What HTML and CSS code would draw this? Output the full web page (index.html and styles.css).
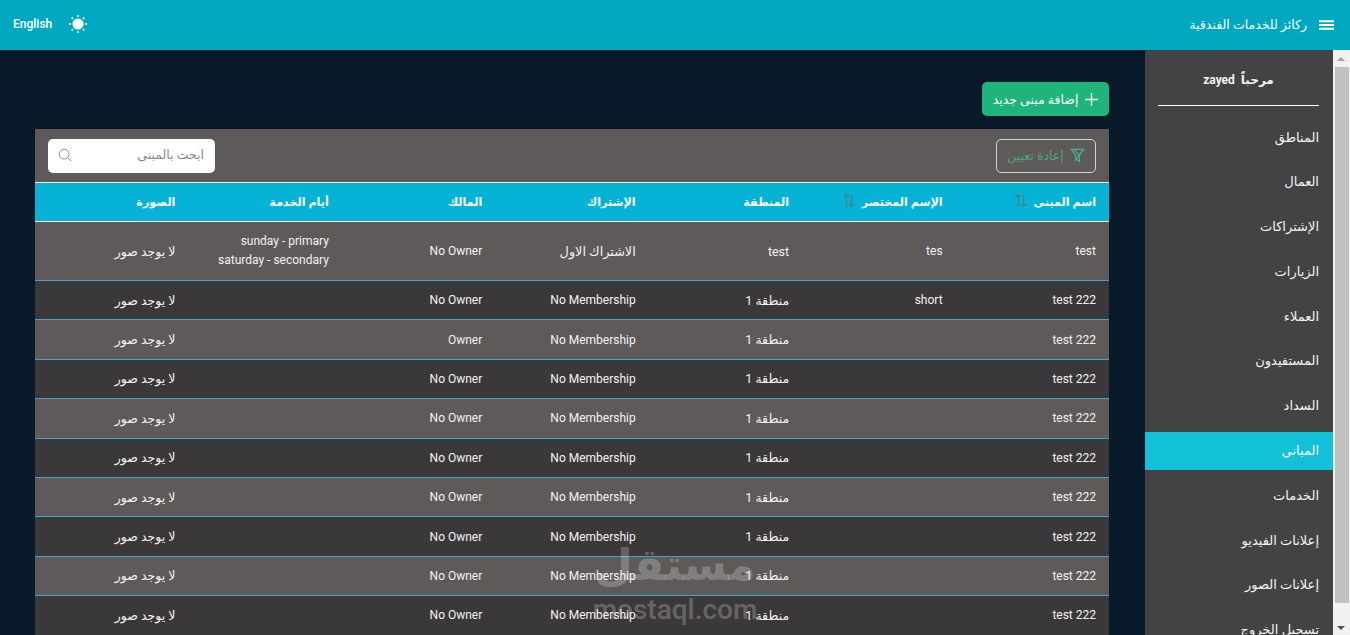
FILE: index.html
```html
<!DOCTYPE html>
<html lang="ar" dir="rtl">
<head>
<meta charset="utf-8">
<title>المباني</title>
<link rel="stylesheet" href="styles.css">
</head>
<body>
<header class="topbar">
  <div class="brand">
    <svg class="menu-icon" viewBox="0 0 16 10"><path d="M0 1h16M0 5h16M0 9h16"/></svg>
    <span>ركائز للخدمات الفندقية</span>
  </div>
  <div class="top-tools">
    <svg class="sun-icon" viewBox="0 0 20 20"><circle cx="10" cy="10" r="5.2"/><path d="M10 0v2M10 18v2M0 10h2M18 10h2M3 3l1.4 1.4M15.6 15.6L17 17M3 17l1.4-1.4M15.6 4.4L17 3"/></svg>
    <span class="lang" dir="ltr">English</span>
  </div>
</header>
<div class="shell">
  <aside class="sidebar">
    <div class="welcome">مرحباً&nbsp; zayed</div>
    <nav class="nav">
      <a>المناطق</a><a>العمال</a><a>الإشتراكات</a><a>الزيارات</a><a>العملاء</a><a>المستفيدون</a><a>السداد</a><a class="active">المباني</a><a>الخدمات</a><a>إعلانات الفيديو</a><a>إعلانات الصور</a><a>تسجيل الخروج</a>
    </nav>
  </aside>
  <main class="content">
    <div class="actions">
      <button class="add-btn"><svg viewBox="0 0 14 14"><path d="M7 0v14M0 7h14"/></svg>إضافة مبنى جديد</button>
    </div>
    <section class="panel">
      <div class="toolbar">
        <button class="reset-btn"><svg viewBox="0 0 16 16"><path d="M1.5 1.5h13L10 7.5v7l-4-3V7.5zM4 1.5l6 6M14.5 1L5 14"/></svg>إعادة تعيين</button>
        <div class="search"><span>ابحث بالمبنى</span><svg viewBox="0 0 16 16"><circle cx="7" cy="7" r="5.6"/><path d="M11 11l4 4"/></svg></div>
      </div>
      <div class="row head">
        <div class="sortable">اسم المبنى <svg viewBox="0 0 14 16"><path d="M4 15V1M1 4l3-3 3 3M10 1v14M7 12l3 3 3-3"/></svg></div>
        <div class="sortable">الإسم المختصر <svg viewBox="0 0 14 16"><path d="M4 15V1M1 4l3-3 3 3M10 1v14M7 12l3 3 3-3"/></svg></div>
        <div>المنطقة</div><div>الإشتراك</div><div>المالك</div><div>أيام الخدمة</div><div>الصورة</div>
      </div>
      <div class="row tall"><div>test</div><div>tes</div><div>test</div><div class="ar">الاشتراك الاول</div><div>No Owner</div><div class="days"><span>sunday - primary</span><span>saturday - secondary</span></div><div>لا يوجد صور</div></div>
      <div class="row"><div>test 222</div><div>short</div><div>منطقة 1</div><div>No Membership</div><div>No Owner</div><div></div><div>لا يوجد صور</div></div>
      <div class="row"><div>test 222</div><div></div><div>منطقة 1</div><div>No Membership</div><div>Owner</div><div></div><div>لا يوجد صور</div></div>
      <div class="row"><div>test 222</div><div></div><div>منطقة 1</div><div>No Membership</div><div>No Owner</div><div></div><div>لا يوجد صور</div></div>
      <div class="row"><div>test 222</div><div></div><div>منطقة 1</div><div>No Membership</div><div>No Owner</div><div></div><div>لا يوجد صور</div></div>
      <div class="row"><div>test 222</div><div></div><div>منطقة 1</div><div>No Membership</div><div>No Owner</div><div></div><div>لا يوجد صور</div></div>
      <div class="row"><div>test 222</div><div></div><div>منطقة 1</div><div>No Membership</div><div>No Owner</div><div></div><div>لا يوجد صور</div></div>
      <div class="row"><div>test 222</div><div></div><div>منطقة 1</div><div>No Membership</div><div>No Owner</div><div></div><div>لا يوجد صور</div></div>
      <div class="row"><div>test 222</div><div></div><div>منطقة 1</div><div>No Membership</div><div>No Owner</div><div></div><div>لا يوجد صور</div></div>
      <div class="row"><div>test 222</div><div></div><div>منطقة 1</div><div>No Membership</div><div>No Owner</div><div></div><div>لا يوجد صور</div></div>
    </section>
  </main>
</div>
<div class="scrollbar"><i class="up"></i><b></b><i class="down"></i></div>
<div class="watermark"><span class="wm-ar">مستقل</span><span class="wm-en" dir="ltr">mostaql.com</span></div>
</body>
</html>
```
FILE: styles.css
```css
* { box-sizing: border-box; }
html, body { margin: 0; height: 635px; overflow: hidden; }
body {
  position: relative;
  background: #081a29;
  color: #f2f2f2;
  font-family: Roboto, "DejaVu Sans", sans-serif;
  font-size: 12.5px;
}
.topbar {
  height: 50px;
  background: #00a9c1;
  display: flex;
  justify-content: space-between;
  align-items: center;
  padding: 0 16px 2px 13px;
  color: #fff;
}
.brand { display: flex; align-items: center; gap: 12px; }
.menu-icon { width: 15px; height: 10px; stroke: #fff; stroke-width: 2; fill: none; margin-top: 2px; }
.top-tools { display: flex; align-items: center; gap: 17px; }
.sun-icon { width: 18px; height: 18px; stroke: #fff; stroke-width: 2; fill: #fff; }
.lang { font-size: 12px; font-weight: 500; }
.shell { display: flex; height: 585px; padding-right: 17px; }
.sidebar { width: 188px; flex: none; background: #434343; overflow: hidden; }
.welcome {
  margin: 0 14px 0 13px;
  height: 56px;
  padding-top: 23px;
  text-align: center;
  font-weight: 700;
  font-size: 12px;
  border-bottom: 1px solid #fff;
}
.nav { display: flex; flex-direction: column; gap: 6.8px; padding-top: 12.5px; }
.nav a {
  height: 38px;
  line-height: 38px;
  padding: 0 14px;
  font-size: 13px;
  flex: none;
}
.nav a.active { background: #12c1d7; }
.content { flex: 1; padding: 32px 36px 0 35px; min-width: 0; }
.actions { display: flex; height: 34px; margin-bottom: 13px; }
.add-btn {
  width: 127px;
  height: 34px;
  border: 0;
  border-radius: 5px;
  background: #1eb47c;
  color: #fff;
  font: inherit;
  display: flex;
  align-items: center;
  justify-content: center;
  gap: 7px;
  padding: 0;
}
.add-btn svg { width: 13px; height: 13px; stroke: #fff; stroke-width: 1.5; fill: none; }
.panel { background: #5e5a5a; }
.toolbar {
  height: 54px;
  padding: 10px 13px 0;
  display: flex;
  justify-content: space-between;
  align-items: flex-start;
  border-bottom: 1px solid #fff;
}
.reset-btn {
  width: 100px;
  height: 34px;
  background: transparent;
  border: 1px solid #c4d8cf;
  border-radius: 5px;
  color: #48a67e;
  font: inherit;
  display: flex;
  align-items: center;
  justify-content: center;
  gap: 6px;
  padding: 0 0 2px;
}
.reset-btn svg { width: 15px; height: 15px; stroke: #3fb585; stroke-width: 1.3; fill: none; }
.search {
  width: 167px;
  height: 34px;
  background: #fff;
  border-radius: 5px;
  padding: 0 11px 3px 10px;
  display: flex;
  align-items: center;
  justify-content: space-between;
  color: #8a8a8a;
}
.search svg { width: 14px; height: 14px; stroke: #8a8a8a; stroke-width: 1.1; fill: none; }
.row {
  display: grid;
  grid-template-columns: repeat(7, 1fr);
  height: 39.4px;
  align-items: center;
  border-bottom: 1px solid #3fa7c9;
  background: #3b3839;
}
.row > div { padding: 0 13px; text-align: right; }
.row > div:nth-child(-n+2),
.row > div:nth-child(4),
.row > div:nth-child(5),
.row > div:nth-child(6) { font-size: 12px; }
.row > div.ar { font-size: 12.8px; }
.row:nth-child(odd) { background: #5e5a5a; }
.row.head {
  height: 39px;
  background: #06b3d6;
  border-bottom: 1px solid #fff;
  font-weight: 700;
  color: #fff;
}
.row.head > div { font-size: 11.2px; }
.row.tall { height: 59px; background: #5e5a5a; }
.sortable { display: flex; align-items: center; justify-content: flex-start; gap: 7px; }
.sortable svg { width: 12px; height: 15px; flex: none; stroke: #4a7f90; stroke-width: 1.5; fill: none; margin-top: -3px; }
.days span { display: block; line-height: 19px; }
.scrollbar {
  position: absolute;
  top: 50px;
  right: 0;
  width: 17px;
  height: 585px;
  background: #f1f1f1;
}
.scrollbar b {
  position: absolute;
  top: 17px;
  left: 2px;
  width: 14px;
  height: 536px;
  background: #c1c1c1;
}
.scrollbar i {
  position: absolute;
  left: 4px;
  width: 0;
  height: 0;
  border: 4px solid transparent;
}
.scrollbar .up { top: 3px; border-bottom-color: #a3a3a3; }
.scrollbar .down { bottom: 1px; border-top-color: #505050; }
.watermark {
  position: absolute;
  left: 590px;
  top: 535px;
  width: 170px;
  display: flex;
  flex-direction: column;
  align-items: center;
  color: rgba(255, 255, 255, 0.24);
  pointer-events: none;
}
.wm-ar { font-family: "DejaVu Sans", sans-serif; font-size: 44px; font-weight: 700; line-height: 60px; }
.wm-en { font-size: 28px; font-weight: 500; line-height: 32px; margin-top: -1px; }
```
